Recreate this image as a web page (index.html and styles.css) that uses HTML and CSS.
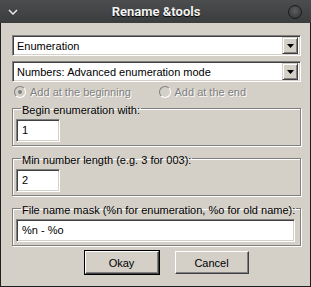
FILE: index.html
```html
<!DOCTYPE html>
<html lang="en">
<head>
    <meta charset="UTF-8">
    <title>Rename &amp;tools</title>
    <link rel="stylesheet" href="styles.css">
</head>
<body>
    <div class="window">
        <div class="titlebar">
            <svg class="chevron" width="10" height="6" viewBox="0 0 10 6"><path d="M1 1 L5 5 L9 1" fill="none" stroke="#e8e8e8" stroke-width="1.5"/></svg>
            <span class="title">Rename &amp;tools</span>
            <span class="closebtn"></span>
        </div>
        <div class="content">
            <div class="combo">
                <span class="combo-text">Enumeration</span>
                <span class="arrow"><svg width="7" height="4" viewBox="0 0 7 4"><path d="M0 0 H7 L3.5 4 Z" fill="#000"/></svg></span>
            </div>
            <div class="combo">
                <span class="combo-text">Numbers: Advanced enumeration mode</span>
                <span class="arrow"><svg width="7" height="4" viewBox="0 0 7 4"><path d="M0 0 H7 L3.5 4 Z" fill="#000"/></svg></span>
            </div>
            <div class="radios">
                <div class="radio"><span class="dot checked"></span>Add at the beginning</div>
                <div class="radio"><span class="dot"></span>Add at the end</div>
            </div>
            <fieldset class="group">
                <legend>Begin enumeration with:</legend>
                <div class="field short">1</div>
            </fieldset>
            <fieldset class="group">
                <legend>Min number length (e.g. 3 for 003):</legend>
                <div class="field short">2</div>
            </fieldset>
            <fieldset class="group">
                <legend>File name mask (%n for enumeration, %o for old name):</legend>
                <div class="field wide">%n - %o</div>
            </fieldset>
            <div class="buttons">
                <div class="btn default">Okay</div>
                <div class="btn">Cancel</div>
            </div>
        </div>
    </div>
</body>
</html>
```
FILE: styles.css
```css
*{
    margin: 0px;
    padding: 0px;
    box-sizing: border-box;
}

body{
    font-family: "Liberation Sans", Arial, sans-serif;
    font-size: 11px;
    color: #000;
}

.window{
    width: 311px;
    height: 287px;
    background-color: #d4d0c8;
    border: 1px solid #1e1e1e;
    border-top: none;
}

.titlebar{
    height: 23px;
    background: linear-gradient(#4b4d4f, #3a3c3e);
    display: flex;
    align-items: center;
    justify-content: space-between;
    padding: 0 9px 0 8px;
    margin: 0 -1px;
}

.title{
    font-family: Roboto, "Liberation Sans", sans-serif;
    font-weight: bold;
    font-size: 13px;
    color: #f2f2f2;
    text-shadow: 0 1px 1px #000;
    margin-left: 6px;
}

.chevron{
    margin-top: 1px;
}

.closebtn{
    width: 14px;
    height: 14px;
    border-radius: 50%;
    background: radial-gradient(circle at 50% 40%, #5c5e60, #2e3032);
    border: 1px solid #1c1c1c;
}

.content{
    padding: 12px 9px 0 11px;
}

.combo{
    height: 21px;
    background-color: #fff;
    border: 1px solid;
    border-color: #808080 #fff #fff #808080;
    box-shadow: inset 1px 1px #404040, inset -1px -1px #d4d0c8;
    display: flex;
    align-items: center;
    justify-content: space-between;
    padding: 2px;
    margin-bottom: 5px;
}

.combo-text{
    padding-left: 2px;
}

.arrow{
    width: 16px;
    height: 17px;
    background-color: #d4d0c8;
    border: 1px solid;
    border-color: #d4d0c8 #404040 #404040 #d4d0c8;
    box-shadow: inset 1px 1px #fff, inset -1px -1px #808080;
    display: flex;
    align-items: center;
    justify-content: center;
}

.radios{
    display: flex;
    height: 18px;
    align-items: center;
    margin-top: -4px;
    margin-bottom: -2px;
}

.radio{
    display: flex;
    align-items: center;
    color: #808080;
    text-shadow: 1px 1px #fff;
    width: 147px;
    padding-left: 2px;
}

.dot{
    width: 12px;
    height: 12px;
    border-radius: 50%;
    border: 1px solid;
    border-color: #808080 #fff #fff #808080;
    background-color: #d4d0c8;
    margin-right: 4px;
    position: relative;
}

.dot.checked::after{
    content: "";
    position: absolute;
    left: 3px;
    top: 3px;
    width: 4px;
    height: 4px;
    border-radius: 50%;
    background-color: #808080;
}

.group{
    border: 1px solid #808080;
    box-shadow: inset 1px 1px #fff, 1px 1px #fff;
    padding: 2px 5px 3px 3px;
    margin-bottom: 3px;
    min-width: 0;
}

.group legend{
    margin-left: 5px;
    padding: 4px 1px 0 1px;
    line-height: 14px;
    white-space: nowrap;
}

.field{
    height: 23px;
    background-color: #fff;
    border: 1px solid;
    border-color: #808080 #fff #fff #808080;
    box-shadow: inset 1px 1px #404040, inset -1px -1px #d4d0c8;
    padding: 4px 0 0 5px;
}

.field.short{
    width: 44px;
}

.buttons{
    display: flex;
    justify-content: center;
    gap: 16px;
    margin-top: 5px;
    padding-left: 20px;
}

.btn{
    width: 74px;
    height: 23px;
    background-color: #d4d0c8;
    border: 1px solid;
    border-color: #fff #404040 #404040 #fff;
    box-shadow: inset -1px -1px #808080;
    display: flex;
    align-items: center;
    justify-content: center;
}

.btn.default{
    outline: 1px solid #000;
}
```
